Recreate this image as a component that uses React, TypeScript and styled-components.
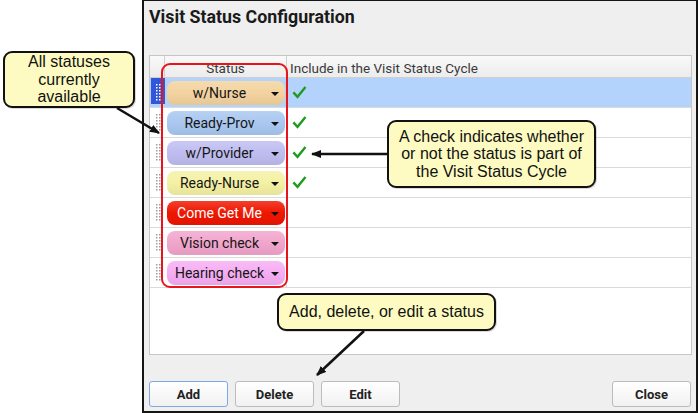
import styled, { createGlobalStyle } from "styled-components";

interface StatusType {
  name: string;
  color: string;
  text?: string;
  inCycle: boolean;
}

const statuses: StatusType[] = [
  { name: "w/Nurse", color: "#f3d39f", inCycle: true },
  { name: "Ready-Prov", color: "#a9c7f0", inCycle: true },
  { name: "w/Provider", color: "#bfbdf0", inCycle: true },
  { name: "Ready-Nurse", color: "#f4f1a4", inCycle: true },
  { name: "Come Get Me", color: "#ef1600", text: "#ffffff", inCycle: false },
  { name: "Vision check", color: "#f2a5cc", inCycle: false },
  { name: "Hearing check", color: "#f6adf3", inCycle: false },
];

const GlobalStyle = createGlobalStyle`
  body {
    margin: 0;
    background: #ffffff;
    font-family: Roboto, "Liberation Sans", sans-serif;
  }
`;

const Page = styled.div`
  position: relative;
  width: 699px;
  height: 413px;
  overflow: hidden;
`;

const Dialog = styled.div`
  margin-left: 142px;
  width: 556px;
  height: 413px;
  box-sizing: border-box;
  border: 2px solid #151515;
  border-top-width: 1px;
  background: #efefef;
  display: flex;
  flex-direction: column;
  padding: 0 5px 4px 5px;
`;

const Title = styled.h1`
  margin: 0;
  padding-top: 5px;
  font-size: 17.8px;
  line-height: 22px;
  font-weight: 700;
  color: #1a1a1a;
`;

const Table = styled.div`
  margin-top: 27px;
  width: 543px;
  height: 300px;
  box-sizing: border-box;
  border: 1px solid #c6c6c6;
  background: #ffffff;
`;

const HeaderRow = styled.div`
  display: grid;
  grid-template-columns: 15px 122px 1fr;
  height: 21px;
  background: linear-gradient(#f9f9f9, #ececec);
  border-bottom: 1px solid #cfcfcf;
  font-size: 13.5px;
  color: #3a3a3a;

  > div {
    display: flex;
    align-items: flex-end;
    padding-bottom: 1px;
    border-right: 1px solid #d0d0d0;
  }
  > div:nth-child(2) {
    justify-content: center;
  }
  > div:last-child {
    border-right: none;
    padding-left: 3px;
  }
`;

const Row = styled.div<{ $selected?: boolean }>`
  display: grid;
  grid-template-columns: 15px 122px 1fr;
  height: 29px;
  border-bottom: 1px solid #dadada;
  background: ${(p) => (p.$selected ? "#b3d3fc" : "#ffffff")};
`;

const HandleCell = styled.div<{ $selected?: boolean }>`
  display: flex;
  align-items: center;
  justify-content: center;
  margin: 0 0 3px 1px;
  padding-top: 3px;
  background: ${(p) => (p.$selected ? "#2f57d8" : "transparent")};
`;

const StatusCell = styled.div`
  display: flex;
  align-items: center;
  padding-left: 2px;
  border-right: 1px solid #d6d6d6;
`;

const Pill = styled.div<{ $color: string; $text?: string }>`
  width: 118px;
  height: 24px;
  box-sizing: border-box;
  border-radius: 8px;
  display: flex;
  align-items: center;
  padding: 0 6px 0 4px;
  background: linear-gradient(
      rgba(255, 255, 255, 0.18),
      rgba(255, 255, 255, 0) 50%,
      rgba(0, 0, 0, 0.06)
    ),
    ${(p) => p.$color};
  color: ${(p) => p.$text || "#151515"};
  font-size: 14px;

  > span {
    flex: 1;
    text-align: center;
    white-space: nowrap;
  }
`;

const Caret = styled.div`
  width: 0;
  height: 0;
  margin-left: 3px;
  margin-top: 2px;
  border-left: 4px solid transparent;
  border-right: 4px solid transparent;
  border-top: 4px solid #111111;
`;

const CheckCell = styled.div`
  display: flex;
  align-items: center;
  padding-left: 5px;
`;

const Spacer = styled.div`
  flex: 1;
`;

const ButtonRow = styled.div`
  display: flex;
  gap: 7px;
  height: 26px;
`;

const Button = styled.button<{ $focused?: boolean }>`
  width: 79px;
  height: 26px;
  box-sizing: border-box;
  border: 1px solid ${(p) => (p.$focused ? "#7ea9e2" : "#bcbcbc")};
  border-radius: 3px;
  background: linear-gradient(#ffffff, #f1f1f1);
  font-family: Roboto, "Liberation Sans", sans-serif;
  font-size: 13px;
  font-weight: 700;
  color: #222222;
  padding: 0;

  &:last-child {
    margin-left: auto;
  }
`;

const Callout = styled.div<{ $left: number; $top: number; $width: number; $height: number }>`
  position: absolute;
  left: ${(p) => p.$left}px;
  top: ${(p) => p.$top}px;
  width: ${(p) => p.$width}px;
  height: ${(p) => p.$height}px;
  box-sizing: border-box;
  border: 2px solid #111111;
  border-radius: 9px;
  background: #fdfbc1;
  box-shadow: 1px 1px 0 rgba(0, 0, 0, 0.15);
  display: flex;
  align-items: center;
  justify-content: center;
  text-align: center;
  font-family: "Liberation Sans", Arial, sans-serif;
  font-size: 16px;
  line-height: 17.5px;
  color: #111111;
`;

const Highlight = styled.div`
  position: absolute;
  left: 161px;
  top: 63px;
  width: 127px;
  height: 225px;
  box-sizing: border-box;
  border: 2px solid #e8141c;
  border-radius: 9px;
`;

const Arrows = styled.svg`
  position: absolute;
  left: 0;
  top: 0;
  pointer-events: none;
`;

const Grip = ({ light }: { light?: boolean }) => (
  <svg width="5" height="17" viewBox="0 0 5 17">
    {[0, 3, 6, 9, 12, 15].map((y) =>
      [0, 3].map((x) => (
        <rect key={`${x}-${y}`} x={x} y={y} width="1.5" height="1.5" fill={light ? "#ffffff" : "#9c9c9c"} />
      ))
    )}
  </svg>
);

const Check = () => (
  <svg width="15" height="15" viewBox="0 0 15 15">
    <path d="M0.5 8.2 L2.3 6.6 L5.4 9.9 L12.6 1.2 L14.4 2.7 L5.6 13.8 Z" fill="#1f9b1f" />
  </svg>
);

const App = () => {
  return (
    <Page>
      <GlobalStyle />
      <Dialog>
        <Title>Visit Status Configuration</Title>
        <Table>
          <HeaderRow>
            <div />
            <div>Status</div>
            <div>Include in the Visit Status Cycle</div>
          </HeaderRow>
          {statuses.map((s, i) => (
            <Row key={s.name} $selected={i === 0}>
              <HandleCell $selected={i === 0}>
                <Grip light={i === 0} />
              </HandleCell>
              <StatusCell>
                <Pill $color={s.color} $text={s.text}>
                  <span>{s.name}</span>
                  <Caret />
                </Pill>
              </StatusCell>
              <CheckCell>{s.inCycle && <Check />}</CheckCell>
            </Row>
          ))}
        </Table>
        <Spacer />
        <ButtonRow>
          <Button $focused>Add</Button>
          <Button>Delete</Button>
          <Button>Edit</Button>
          <Button>Close</Button>
        </ButtonRow>
      </Dialog>

      <Highlight />

      <Callout $left={3} $top={51} $width={132} $height={57}>
        All statuses
        <br />
        currently
        <br />
        available
      </Callout>
      <Callout $left={387} $top={120} $width={209} $height={68}>
        A check indicates whether
        <br />
        or not the status is part of
        <br />
        the Visit Status Cycle
      </Callout>
      <Callout $left={277} $top={293} $width={219} $height={38}>
        Add, delete, or edit a status
      </Callout>

      <Arrows width="699" height="413" viewBox="0 0 699 413">
        <defs>
          <marker id="head" markerWidth="10" markerHeight="8" refX="9" refY="4" orient="auto" markerUnits="userSpaceOnUse">
            <path d="M0 0 L10 4 L0 8 Z" fill="#111111" />
          </marker>
        </defs>
        <g stroke="#111111" strokeWidth="2.5" fill="none">
          <line x1="117" y1="108" x2="159" y2="133" markerEnd="url(#head)" />
          <line x1="387" y1="154" x2="312" y2="154" markerEnd="url(#head)" />
          <line x1="364" y1="331" x2="317" y2="375" markerEnd="url(#head)" />
        </g>
      </Arrows>
    </Page>
  );
};

export default App;
